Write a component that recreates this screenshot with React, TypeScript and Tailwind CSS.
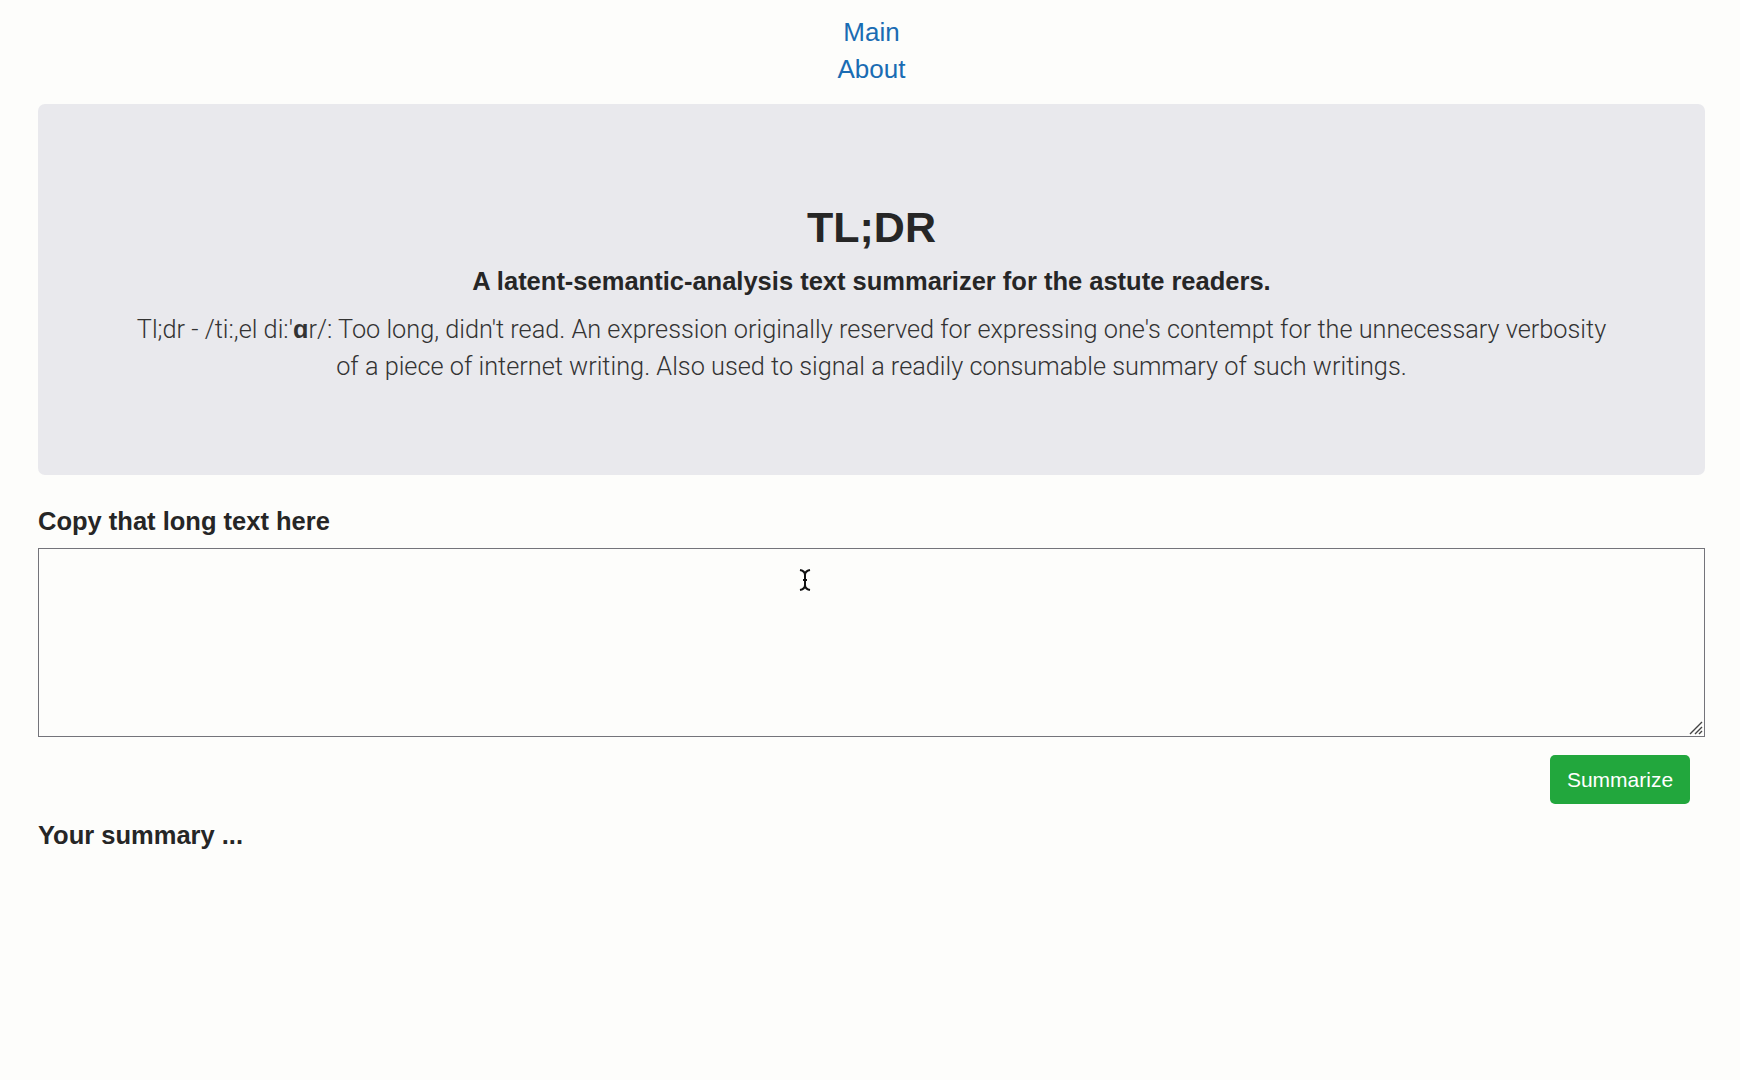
export default function App() {
  return (
    <div
      className="min-h-[1080px] bg-[#fdfdfb] pl-[38px] pr-[35px] text-[#2b2b2b]"
      style={{ fontFamily: '"Liberation Sans", Arial, sans-serif' }}
    >
      <nav className="flex flex-col items-center pt-[14px] text-[26px] leading-[37px]">
        <a href="#" className="text-[#1a6cb3]">
          Main
        </a>
        <a href="#" className="text-[#1a6cb3]">
          About
        </a>
      </nav>

      <section className="mt-[16px] flex h-[371px] flex-col items-center rounded-[7px] bg-[#e9e9ed] pt-[100px] text-center">
        <h1 className="text-[43px] font-bold leading-[1.1] text-[#262626]">TL;DR</h1>
        <h2 className="mt-[15px] text-[25.5px] font-bold leading-[1.2] text-[#262626]">
          A latent-semantic-analysis text summarizer for the astute readers.
        </h2>
        <p
          className="mt-[14px] text-[25.3px] font-light leading-[37px] text-[#333]"
          style={{ fontFamily: 'Roboto, "Liberation Sans", sans-serif' }}
        >
          Tl;dr - /ti:,el di:'<span className="font-bold">ɑ</span>r/: Too long, didn't read. An
          expression originally reserved for expressing one's contempt for the unnecessary verbosity
          <br />
          of a piece of internet writing. Also used to signal a readily consumable summary of such
          writings.
        </p>
      </section>

      <label className="mt-[31px] block text-[25.5px] font-bold leading-[30px] text-[#262626]">
        Copy that long text here
      </label>
      <div className="relative mt-[12px]">
        <textarea className="block h-[189px] w-full resize-none border border-[#74747a] bg-transparent outline-none" />
        <svg
          className="pointer-events-none absolute bottom-[2px] right-[2px]"
          width="16"
          height="16"
          viewBox="0 0 16 16"
          stroke="#444"
          strokeWidth="1.4"
        >
          <path d="M15 3 L3 15 M15 8 L8 15 M15 12 L12 15" />
        </svg>
        <svg
          className="pointer-events-none absolute left-[760px] top-[20px]"
          width="14"
          height="24"
          viewBox="0 0 14 24"
          fill="none"
          stroke="#111"
          strokeWidth="2"
        >
          <path d="M2 2 Q7 3 7 7 V17 Q7 21 2 22 M12 2 Q7 3 7 7 M12 22 Q7 21 7 17 M5 12 H9" />
        </svg>
      </div>

      <div className="mt-[18px] flex justify-end pr-[15px]">
        <button
          type="button"
          className="h-[49px] w-[140px] rounded-[5px] bg-[#22a73d] text-[21px] text-white"
        >
          Summarize
        </button>
      </div>

      <h3 className="mt-[16px] text-[25.5px] font-bold leading-[30px] text-[#262626]">
        Your summary ...
      </h3>
    </div>
  );
}
